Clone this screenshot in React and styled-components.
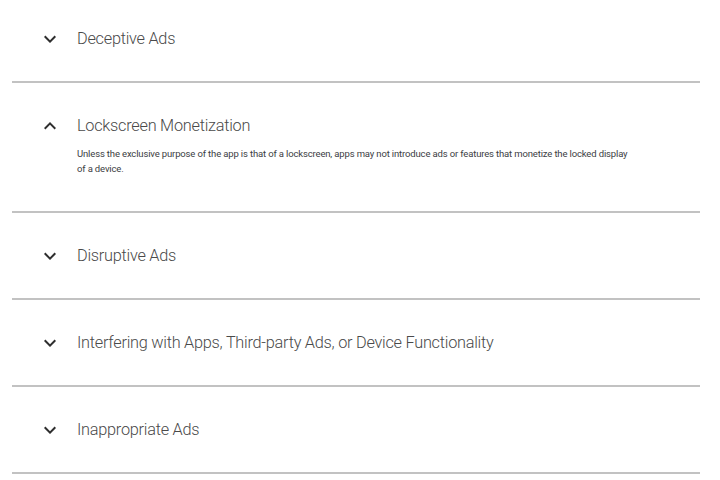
import React, { useState } from 'react';
import styled, { createGlobalStyle } from 'styled-components';

const GlobalStyle = createGlobalStyle`
  body {
    margin: 0;
    background: #ffffff;
    font-family: Roboto, "Noto Sans", Arial, sans-serif;
    overflow: hidden;
  }
`;

const List = styled.div`
  margin-top: -4px;
  padding: 0 20px 0 12px;
`;

const Item = styled.section`
  border-bottom: 2px solid #c2c2c2;
`;

const Header = styled.button`
  display: flex;
  align-items: center;
  width: 100%;
  height: ${(p) => (p.$open ? '63px' : '85px')};
  padding: ${(p) => (p.$open ? '31px 0 8px 26px' : '0 0 0 26px')};
  background: none;
  border: none;
  cursor: pointer;
  text-align: left;
`;

const Chevron = styled.svg`
  width: 24px;
  height: 24px;
  flex: none;
  fill: #2e2e2e;
  margin-right: 15px;
  transform: ${(p) => (p.$open ? 'rotate(180deg)' : 'none')};
`;

const Title = styled.span`
  font-family: Roboto, Arial, sans-serif;
  font-size: 16.3px;
  letter-spacing: -0.25px;
  line-height: 24px;
  font-weight: 300;
  color: #4a4a4a;
`;

const Body = styled.p`
  margin: 0;
  padding: 0 0 35px 65px;
  max-width: 555px;
  font-size: 9.5px;
  letter-spacing: -0.15px;
  line-height: 15px;
  color: #3c4043;
`;

const items = [
  { title: 'Deceptive Ads' },
  {
    title: 'Lockscreen Monetization',
    body:
      'Unless the exclusive purpose of the app is that of a lockscreen, apps may not introduce ads or features that monetize the locked display of a device.',
  },
  { title: 'Disruptive Ads' },
  { title: 'Interfering with Apps, Third-party Ads, or Device Functionality' },
  { title: 'Inappropriate Ads' },
];

const App = () => {
  const [open, setOpen] = useState(1);

  return (
    <>
      <GlobalStyle />
      <List>
        {items.map((item, i) => {
          const isOpen = open === i && item.body;
          return (
            <Item key={item.title}>
              <Header $open={isOpen} onClick={() => setOpen(open === i ? -1 : i)}>
                <Chevron viewBox="0 0 24 24" $open={isOpen}>
                  <path d="M16.59 8.59L12 13.17 7.41 8.59 6 10l6 6 6-6z" />
                </Chevron>
                <Title>{item.title}</Title>
              </Header>
              {isOpen && <Body>{item.body}</Body>}
            </Item>
          );
        })}
      </List>
    </>
  );
};

export default App;
